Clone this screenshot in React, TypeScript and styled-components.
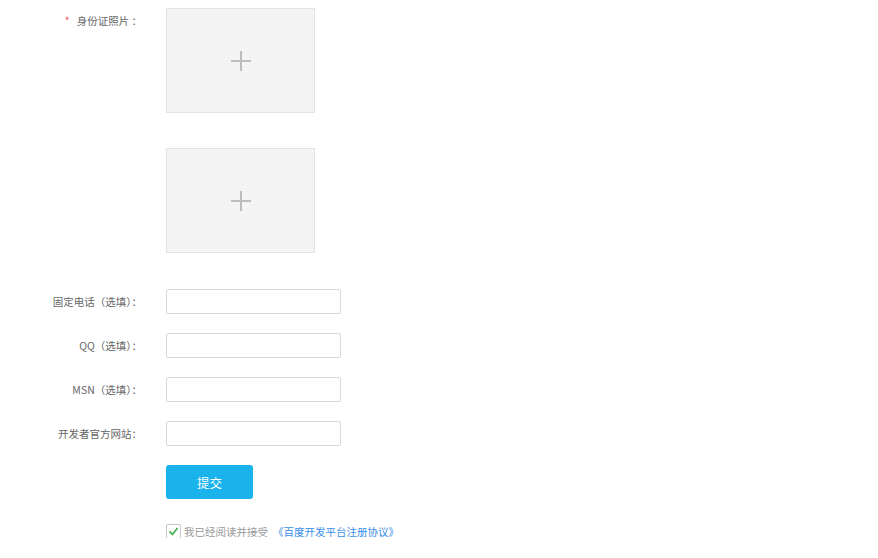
import styled, { createGlobalStyle } from "styled-components";

const GlobalStyle = createGlobalStyle`
  body {
    margin: 0;
    background: #fff;
    font-family: "Microsoft YaHei", "Noto Sans CJK SC", "Liberation Sans", sans-serif;
  }
`;

const Form = styled.div`
  display: grid;
  grid-template-columns: 142px 175px;
  column-gap: 24px;
  padding-top: 8px;
`;

const Label = styled.div<{ $line: number }>`
  font-size: 10.5px;
  color: #666;
  text-align: right;
  line-height: ${(p) => p.$line}px;
  white-space: nowrap;
  align-self: start;
`;

const Star = styled.span`
  color: #f25a5a;
  margin-right: 7px;
`;

const Field = styled.div<{ $gap: number }>`
  margin-bottom: ${(p) => p.$gap}px;
`;

const Upload = styled.div`
  width: 149px;
  height: 105px;
  box-sizing: border-box;
  background: #f4f4f4;
  border: 1px solid #e3e3e3;
  display: flex;
  align-items: center;
  justify-content: center;
`;

const Input = styled.input`
  display: block;
  width: 175px;
  height: 25px;
  box-sizing: border-box;
  border: 1px solid #d9d9d9;
  border-radius: 2px;
  outline: none;
`;

const Button = styled.button`
  display: block;
  width: 87px;
  height: 34px;
  border: none;
  border-radius: 3px;
  background: #1ab3ec;
  color: #fff;
  font-size: 12.5px;
  font-family: inherit;
  padding: 0;
`;

const Agree = styled.div`
  display: flex;
  align-items: center;
  font-size: 10.5px;
  color: #999;
  white-space: nowrap;
  height: 14px;
`;

const Box = styled.span`
  width: 13px;
  height: 13px;
  border: 1px solid #c8c8c8;
  border-radius: 2px;
  display: flex;
  align-items: center;
  justify-content: center;
  margin-right: 3px;
  background: #fff;
  flex: none;
`;

const Link = styled.a`
  color: #3b8ee8;
  margin-left: 5px;
  text-decoration: none;
`;

const Plus = () => (
  <svg width="22" height="22" viewBox="0 0 22 22">
    <path d="M11 1v20M1 11h20" stroke="#bdbdbd" strokeWidth="2" fill="none" />
  </svg>
);

const Check = () => (
  <svg width="11" height="11" viewBox="0 0 11 11">
    <path d="M1.5 5.5l3 3 5-6.5" stroke="#4caf50" strokeWidth="1.8" fill="none" />
  </svg>
);

const fields = ["固定电话（选填）：", "QQ（选填）：", "MSN（选填）：", "开发者官方网站："];

export default function App() {
  return (
    <>
      <GlobalStyle />
      <Form>
        <Label $line={26}>
          <Star>*</Star>身份证照片 ：
        </Label>
        <Field $gap={35}>
          <Upload>
            <Plus />
          </Upload>
        </Field>
        <div />
        <Field $gap={36}>
          <Upload>
            <Plus />
          </Upload>
        </Field>
        {fields.map((f) => (
          <>
            <Label key={f} $line={25}>
              {f}
            </Label>
            <Field $gap={19}>
              <Input />
            </Field>
          </>
        ))}
        <div />
        <Field $gap={25}>
          <Button>提交</Button>
        </Field>
        <div />
        <Agree>
          <Box>
            <Check />
          </Box>
          我已经阅读并接受
          <Link href="#">《百度开发平台注册协议》</Link>
        </Agree>
      </Form>
    </>
  );
}
